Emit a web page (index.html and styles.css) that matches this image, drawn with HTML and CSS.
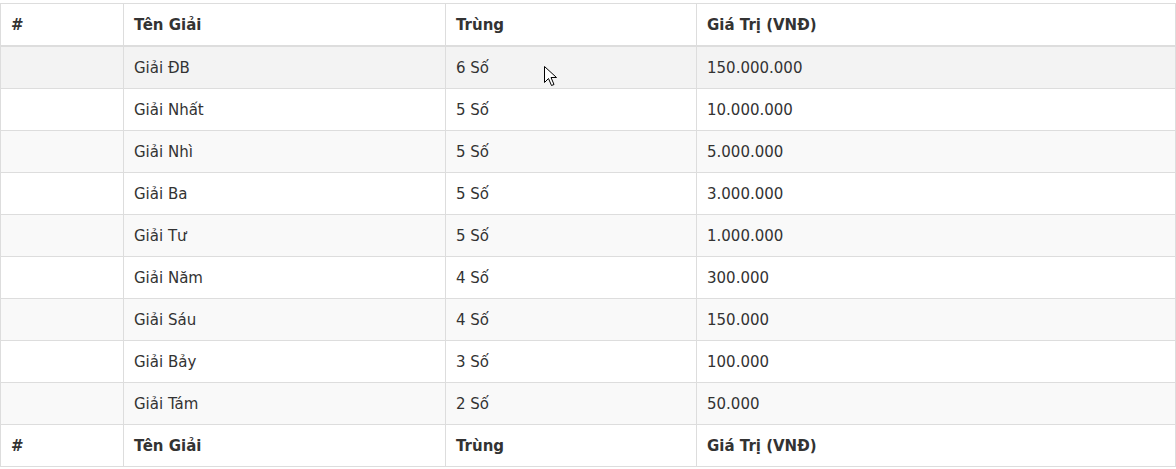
FILE: index.html
```html
<!DOCTYPE html>
<html lang="vi">
<head>
<meta charset="utf-8">
<title>Cơ cấu giải thưởng</title>
<link rel="stylesheet" href="styles.css">
</head>
<body>
<div class="wrap">
<table class="prize-table">
  <colgroup>
    <col class="c-num">
    <col class="c-name">
    <col class="c-match">
    <col class="c-value">
  </colgroup>
  <thead>
    <tr><th>#</th><th>Tên Giải</th><th>Trùng</th><th>Giá Trị (VNĐ)</th></tr>
  </thead>
  <tbody>
    <tr class="odd hover"><td></td><td>Giải ĐB</td><td class="match-cell">6 Số<svg class="cursor" width="13" height="21" viewBox="0 0 13 21"><path d="M0.5 0.5 L0.5 16.5 L4.5 12.5 L7.5 19.5 L10 18.5 L7 11.5 L12.5 11.5 Z" fill="#fff" stroke="#000" stroke-width="1" stroke-linejoin="miter"/></svg></td><td>150.000.000</td></tr>
    <tr><td></td><td>Giải Nhất</td><td>5 Số</td><td>10.000.000</td></tr>
    <tr class="odd"><td></td><td>Giải Nhì</td><td>5 Số</td><td>5.000.000</td></tr>
    <tr><td></td><td>Giải Ba</td><td>5 Số</td><td>3.000.000</td></tr>
    <tr class="odd"><td></td><td>Giải Tư</td><td>5 Số</td><td>1.000.000</td></tr>
    <tr><td></td><td>Giải Năm</td><td>4 Số</td><td>300.000</td></tr>
    <tr class="odd"><td></td><td>Giải Sáu</td><td>4 Số</td><td>150.000</td></tr>
    <tr><td></td><td>Giải Bảy</td><td>3 Số</td><td>100.000</td></tr>
    <tr class="odd"><td></td><td>Giải Tám</td><td>2 Số</td><td>50.000</td></tr>
  </tbody>
  <tfoot>
    <tr><th>#</th><th>Tên Giải</th><th>Trùng</th><th>Giá Trị (VNĐ)</th></tr>
  </tfoot>
</table>
</div>
</body>
</html>
```
FILE: styles.css
```css
html, body {
  margin: 0;
  padding: 0;
  background: #ffffff;
}
body {
  font-family: "DejaVu Sans", Verdana, sans-serif;
  font-size: 15px;
  line-height: 21px;
  color: #333333;
}
.wrap {
  padding-top: 3px;
}
.prize-table {
  border-collapse: collapse;
  table-layout: fixed;
  width: 1175px;
  border: 1px solid #dddddd;
}
.c-num { width: 123px; }
.c-name { width: 322px; }
.c-match { width: 251px; }
.c-value { width: 479px; }
.prize-table th,
.prize-table td {
  border: 1px solid #dddddd;
  padding: 11px 10px 9px;
  text-align: left;
  vertical-align: top;
  white-space: nowrap;
}
.prize-table th {
  font-weight: bold;
}
.prize-table thead th {
  border-bottom: 2px solid #dddddd;
}
.prize-table tbody tr.odd td {
  background: #f9f9f9;
}
.prize-table tbody tr.hover td {
  background: #f3f3f3;
}
.match-cell {
  position: relative;
}
.cursor {
  position: absolute;
  left: 98px;
  top: 19px;
}
```
